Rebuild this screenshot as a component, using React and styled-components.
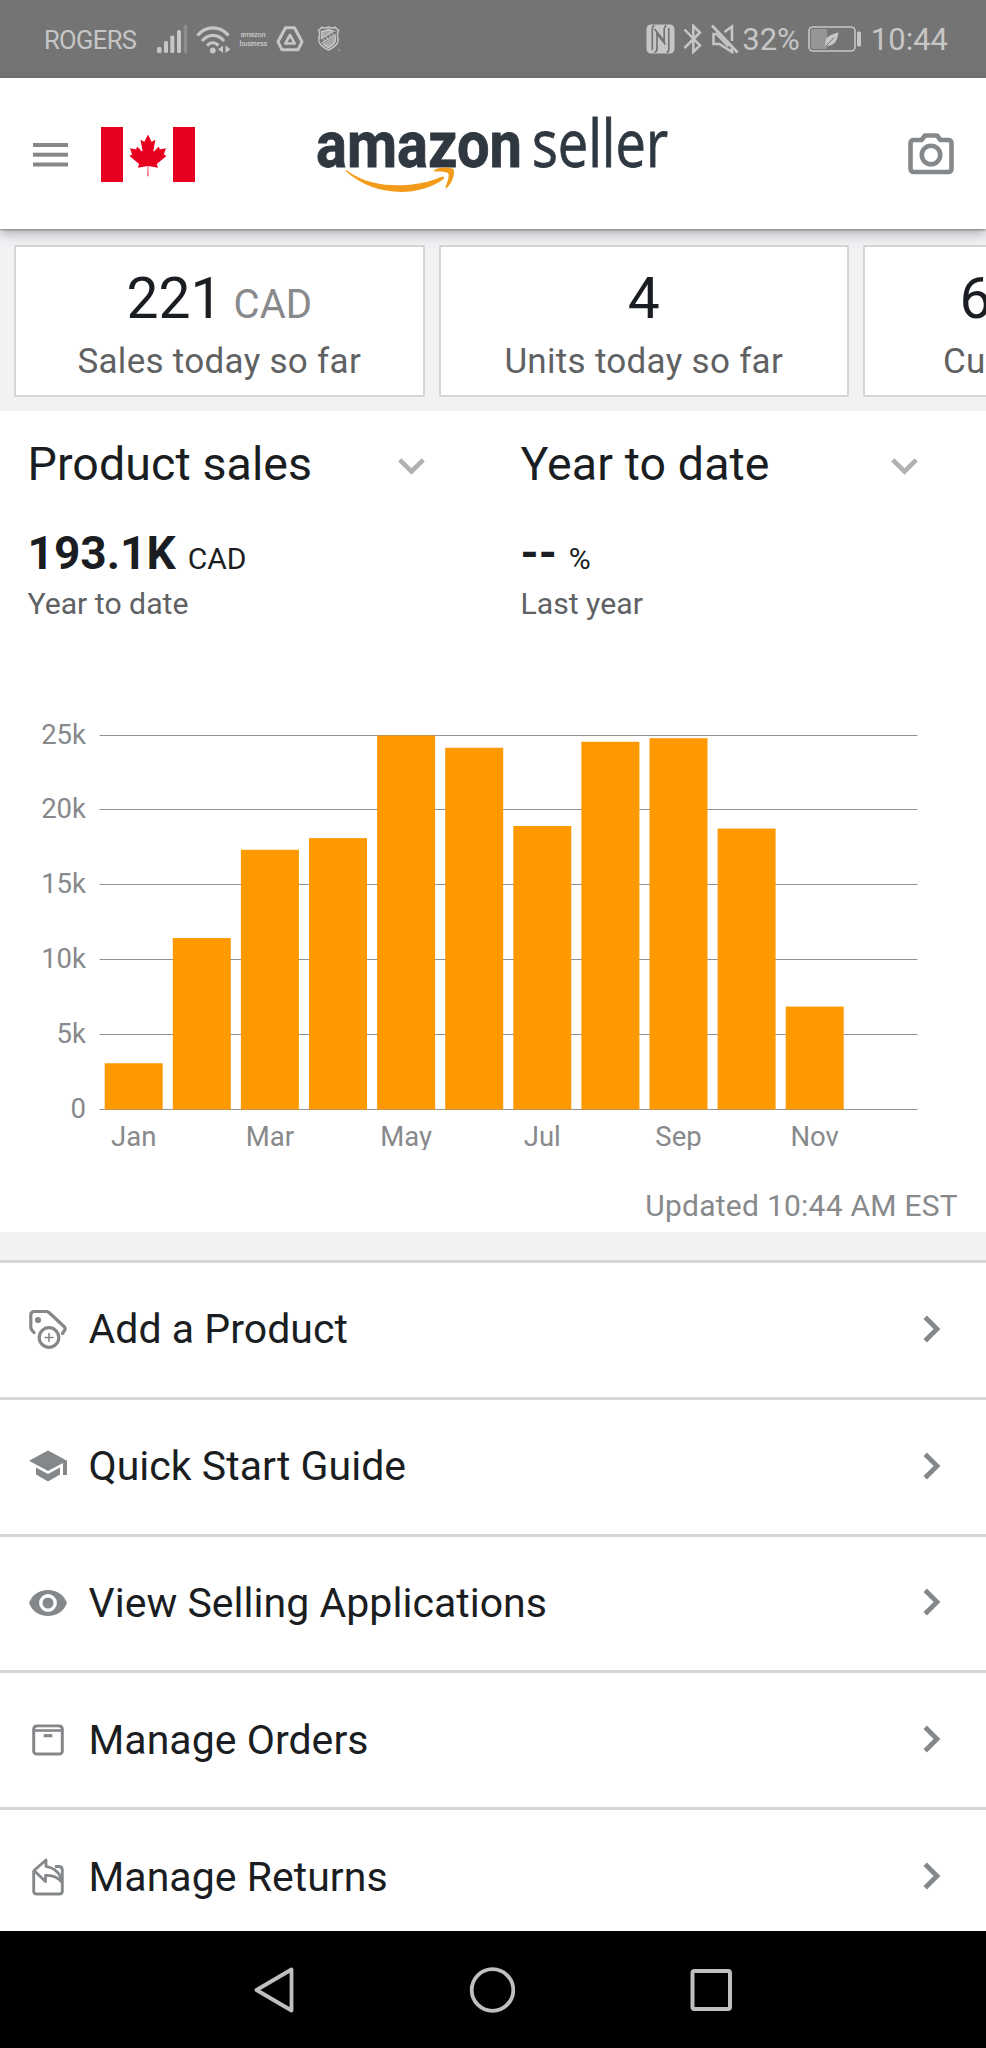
import React from 'react';
import styled, { createGlobalStyle } from 'styled-components';

const COLORS = {
  INK: '#1a1d21',
  TEXT: '#5f6163',
  MUTED: '#87898b',
  ICON: '#85888b',
  LINE: '#d4d6d7',
  STRIP: '#f0f2f4',
  ORANGE: '#ff9900',
  STATUS: '#747474',
  STATUS_ICON: '#c6c6c6',
  LOGO: '#2f3841',
  RED: '#e8001f',
};

const GlobalStyle = createGlobalStyle`
  body {
    margin: 0;
    background-color: #ffffff;
  }

  * {
    box-sizing: border-box;
  }
`;

const Screen = styled.div`
  display: flex;
  flex-direction: column;
  width: 986px;
  height: 2048px;
  overflow: hidden;
  font-family: Roboto, 'Liberation Sans', sans-serif;
  color: ${COLORS.INK};
  background-color: #ffffff;

  svg {
    display: block;
    flex: none;
  }
`;

const StyledStatusBar = styled.div`
  display: flex;
  flex: none;
  align-items: center;
  justify-content: space-between;
  height: 78px;
  padding: 0 38px 0 44px;
  color: ${COLORS.STATUS_ICON};
  background-color: ${COLORS.STATUS};
`;

const StatusGroup = styled.div`
  display: flex;
  align-items: center;
  gap: 8px;
`;

const StatusText = styled.span`
  font-size: 31px;
  line-height: 36px;
  white-space: nowrap;
  padding-top: 2px;
`;

const Carrier = styled(StatusText)`
  margin-right: 13px;
  font-size: 25.5px;
  letter-spacing: -0.6px;
`;

const BatteryLevel = styled(StatusText)`
  margin-left: -5px;
`;

const Clock = styled(StatusText)`
  margin-left: 1px;
`;

const BusinessBadge = styled.div`
  width: 27px;
  margin: 0 2px 0 0;
  font-size: 7.5px;
  font-weight: 500;
  line-height: 9px;
  text-align: center;
  letter-spacing: -0.3px;
`;

const StyledHeader = styled.header`
  position: relative;
  z-index: 1;
  display: flex;
  flex: none;
  align-items: center;
  height: 151px;
  padding: 0 32px 0 33px;
  background-color: #ffffff;
  box-shadow: 0 1px 2px rgba(60, 60, 70, 0.5), 0 4px 12px rgba(60, 60, 70, 0.4);

  .header-menu {
    margin-top: 2px;
  }

  .header-flag {
    margin: 2px 0 0 33px;
  }

  .header-logo {
    margin-left: 121px;
    overflow: visible;
  }

  .header-camera {
    margin: 0 0 0 auto;
  }
`;

const CardStrip = styled.div`
  display: flex;
  flex: none;
  gap: 14px;
  height: 182px;
  padding: 16px 0 14px 14px;
  overflow: hidden;
  background-color: ${COLORS.STRIP};
`;

const Card = styled.div`
  display: flex;
  flex: none;
  flex-direction: column;
  align-items: center;
  width: 410.5px;
  height: 152px;
  padding-top: 18px;
  border: 2px solid ${COLORS.LINE};
  background-color: #ffffff;
`;

const CardValue = styled.div`
  height: 68px;
  font-size: 57px;
  line-height: 68px;
  white-space: nowrap;

  span {
    margin-left: 11px;
    font-size: 40px;
    line-height: 40px;
    color: ${COLORS.MUTED};
  }
`;

const CardLabel = styled.div`
  margin-top: 8px;
  font-size: 35px;
  line-height: 42px;
  letter-spacing: 0.3px;
  white-space: nowrap;
  color: ${COLORS.TEXT};
`;

const Summary = styled.section`
  display: grid;
  flex: none;
  grid-template-columns: 493px 493px;
  height: 309px;
  padding-top: 26px;
`;

const SummaryColumn = styled.div`
  padding: 0 68.5px 0 27.5px;
`;

const Dropdown = styled.div`
  display: flex;
  align-items: center;
  justify-content: space-between;
  height: 54px;
  font-size: 46.5px;
  letter-spacing: 0.1px;
  white-space: nowrap;

  svg {
    margin-top: 4px;
  }
`;

const Figure = styled.div`
  height: 54px;
  margin-top: 35px;
  font-size: 46px;
  font-weight: 700;
  line-height: 54px;
  white-space: nowrap;

  span {
    margin-left: 12px;
    font-size: 30px;
    font-weight: 400;
    line-height: 30px;
  }
`;

const Caption = styled.div`
  margin-top: 6px;
  font-size: 30.2px;
  line-height: 36px;
  color: ${COLORS.TEXT};
`;

const AxisLabel = styled.text`
  font-family: Roboto, 'Liberation Sans', sans-serif;
  font-size: 27.5px;
  fill: ${COLORS.MUTED};
`;

const Updated = styled.div`
  flex: none;
  height: 82px;
  padding: 38px 28px 0 0;
  font-size: 30px;
  letter-spacing: 0.25px;
  line-height: 36px;
  text-align: right;
  color: ${COLORS.MUTED};
`;

const Divider = styled.div`
  flex: none;
  height: 28px;
  background-color: ${COLORS.STRIP};
`;

const Menu = styled.nav`
  flex: 1;
  min-height: 0;
  overflow: hidden;
`;

const MenuItem = styled.div`
  display: grid;
  grid-template-columns: 38px 1fr 18px;
  column-gap: 21.5px;
  align-items: center;
  height: 136.8px;
  padding: 0 45px 1px 29px;
  border-top: 3px solid ${COLORS.LINE};
  font-size: 41px;
  letter-spacing: 0.03px;
  white-space: nowrap;

  .menu-chevron {
    margin-bottom: 1px;
  }
`;

const NavigationBar = styled.div`
  display: flex;
  flex: none;
  align-items: center;
  justify-content: center;
  gap: 175px;
  height: 117px;
  background-color: #000000;
`;

const SignalIcon = () => (
  <svg width="31" height="28" viewBox="0 0 31 28" fill="currentColor">
    <rect x="0" y="22" width="4.5" height="6" rx="1.5" />
    <rect x="7" y="16" width="4" height="12" rx="1.5" />
    <rect x="13.3" y="10.5" width="4" height="17.5" rx="1.5" />
    <rect x="20" y="5" width="4" height="23" rx="1.5" />
    <rect x="26.7" y="0" width="3.5" height="28" rx="1" opacity="0.3" />
  </svg>
);

const WifiIcon = () => (
  <svg width="35" height="29" viewBox="0 0 35 29" fill="none" stroke="currentColor" strokeWidth="3.2">
    <path d="M1.5 10.5C10 .4 24 .4 32.5 10.5" />
    <path d="M6 16C12.5 8.5 21.5 8.5 28 16" />
    <path d="M11 20.5C14.5 17 19 17 22.5 20.5" />
    <circle cx="16.8" cy="25.5" r="2.9" fill="currentColor" stroke="none" />
    <path d="M27 20.5v7.5l-5-3.7zM29.5 20.5v7.5l5-3.7z" fill="currentColor" stroke="none" />
  </svg>
);

const DriveIcon = () => (
  <svg width="28" height="26" viewBox="0 0 28 26" fill="none" stroke="currentColor" strokeWidth="3" strokeLinejoin="round">
    <path d="M9.5 1.8h9l7.5 14-4 8H6l-4-8z" />
    <path d="M14 9l4.7 8.5H9.3z" strokeWidth="2.6" />
  </svg>
);

const ShieldIcon = () => (
  <svg className="shield" width="34" height="26" viewBox="-5 0 34 26" fill="none" stroke="currentColor" strokeWidth="1.5">
    <path d="M1.5 4.5L5 1.2Q8 3 11.5 1Q15 3 18 1.2L21.7 4.5Q19.5 8 21.2 13Q22 19 11.5 24Q1 19 1.8 13Q3.5 8 1.5 4.5z" />
    <path d="M4.5 5.5Q8 5.5 11.5 3.5Q15 5.5 18.5 5.5Q17.5 9 18.5 13Q18.5 18 11.5 21.5Q4.5 18 4.5 13Q5.5 9 4.5 5.5z" fill="currentColor" fillOpacity="0.65" />
    <path d="M3.5 16.5L19 6.5" stroke={COLORS.STATUS} strokeWidth="4.5" />
    <path d="M4.5 17L19 8.5M4.5 12.5L17 5" strokeWidth="1.1" />
    <path d="M6.5 13l1.5 2.5M9.5 11l1.5 3M12.5 9.3l1.5 2.5M15.5 7.5l1 2.5" strokeWidth="1.1" />
    <circle cx="22.3" cy="24" r="0.7" fill="currentColor" stroke="none" />
  </svg>
);

const NfcIcon = () => (
  <svg width="29" height="30" viewBox="0 0 29 30">
    <rect x="0.5" y="0.5" width="28" height="29" rx="4.5" fill="currentColor" />
    <g fill="none" stroke={COLORS.STATUS} strokeWidth="1.7">
      <path d="M8.5 1.5Q6.3 2 6.3 5V26" />
      <path d="M20.5 28.5Q22.8 28 22.8 25V4" />
      <path d="M8.5 28.5Q11 27.5 11 25V10L19.5 20.5" />
      <path d="M20.5 1.5Q18.2 2.500 18.200 5V17L8.5 5" />
    </g>
  </svg>
);

const BluetoothIcon = () => (
  <svg width="20" height="30" viewBox="0 0 20 30" fill="none" stroke="currentColor" strokeWidth="2.5">
    <path d="M1.5 5.5L17 21.5L10.3 28V2L17 8.5L1.5 24" />
  </svg>
);

const MuteIcon = () => (
  <svg width="28" height="30" viewBox="0 0 28 30" fill="none" stroke="currentColor" strokeWidth="2.5">
    <path d="M1 1.5L26.5 28.5" strokeWidth="2.8" />
    <path d="M13.5 8L21 2.5V17M7 10H2.5V20H8.5L21 28V23.5" />
    <path d="M6 10.5L17.5 22.5" />
  </svg>
);

const BatteryIcon = () => (
  <svg width="54" height="26" viewBox="0 0 54 26">
    <rect x="1" y="1" width="46" height="24" rx="4" fill="none" stroke="currentColor" strokeWidth="1.6" />
    <rect x="3" y="3" width="16" height="20" rx="1.5" fill="currentColor" opacity="0.42" />
    <path d="M30.5 6.5C22 8.5 17.5 11 17.5 16L16.5 20.5L19 20C26 20 29.5 15 30.5 6.5z" fill="currentColor" />
    <path d="M17.5 20.5L26 11.5" stroke={COLORS.STATUS} strokeWidth="1" />
    <rect x="49" y="5.5" width="4" height="15" rx="1.5" fill="currentColor" />
  </svg>
);

const HamburgerIcon = () => (
  <svg className="header-menu" width="35" height="24" viewBox="0 0 35 24" fill={COLORS.ICON}>
    <rect y="0" width="35" height="4" />
    <rect y="9.7" width="35" height="4" />
    <rect y="19.5" width="35" height="4" />
  </svg>
);

const CanadaFlag = () => (
  <svg className="header-flag" width="94" height="56" viewBox="0 0 94 56" fill={COLORS.RED}>
    <rect width="22" height="55" />
    <rect x="72" width="22" height="55" />
    <path
      transform="translate(-.8 3.5) scale(.00995 .0103)"
      d="m4850 4430-20-863a95 95 0 0 1 126-98l859 151-116-320a65 65 0 0 1 20-73l941-762-212-99a65 65 0 0 1-34-79l186-572-542 115a65 65 0 0 1-73-38l-105-247-423 454a65 65 0 0 1-111-57l204-1052-327 189a65 65 0 0 1-91-27l-332-652-332 652a65 65 0 0 1-91 27l-327-189 204 1052a65 65 0 0 1-111 57l-423-454-105 247a65 65 0 0 1-73 38l-542-115 186 572a65 65 0 0 1-34 79l-212 99 941 762a65 65 0 0 1 20 73l-116 320 859-151a95 95 0 0 1 126 98l-20 863z"
    />
  </svg>
);

const LogoWord = styled.text`
  font-family: ${({ $family }) => $family}, sans-serif;
  font-size: 65px;
  font-weight: ${({ $weight }) => $weight};
  fill: ${COLORS.LOGO};
  stroke: ${COLORS.LOGO};
  stroke-width: 0.8px;
`;

const Logo = () => (
  <svg className="header-logo" width="354" height="84" viewBox="316 111 354 84">
    <LogoWord $family="Roboto" $weight={700} x="316" y="165.5" textLength="206" lengthAdjust="spacingAndGlyphs">amazon</LogoWord>
    <LogoWord $family="'Open Sans'" $weight={400} x="532" y="165.5" textLength="136" lengthAdjust="spacingAndGlyphs">seller</LogoWord>
    {/* smile and arrow head */}
    <g fill="#f39c1c">
      <path d="M346.5 169.3C364 182 382 184.5 401 184.3C416 184 430 181 441.5 175.8C443.6 175 445 176.8 443.3 178.2C432 186.5 416 190.9 401.5 190.9C380 190.9 361 183.5 346.3 170.7C345.6 170 345.9 169 346.5 169.3z" />
      <path d="M434.3 168.9C440 165.8 450 165.8 453.5 168C455.5 172.2 452 182.2 447 186.8C446 187.6 445.1 187.2 445.5 186.1C447.5 181.2 449.5 174.7 448.3 172.4C446.5 170.6 440 170.8 435 170.6C433.7 170.6 433.5 169.6 434.3 168.9z" />
    </g>
  </svg>
);

const CameraIcon = () => (
  <svg className="header-camera" width="46" height="42" viewBox="0 0 46 42" fill="none" stroke={COLORS.ICON}>
    <path d="M6 7H13.5L17 2.5H29L32.5 7H40Q43.5 7 43.5 10.5V35.5Q43.5 39 40 39H6Q2.5 39 2.5 35.5V10.5Q2.5 7 6 7z" strokeWidth="4.6" strokeLinejoin="round" />
    <circle cx="23" cy="22" r="9.2" strokeWidth="4.6" />
  </svg>
);

const ChevronDown = () => (
  <svg width="27" height="17" viewBox="0 0 27 17" fill="none" stroke="#b0b1b3" strokeWidth="4.6">
    <path d="M1.8 1.8L13.5 13.5L25.2 1.8" />
  </svg>
);

const ChevronRight = () => (
  <svg className="menu-chevron" width="18" height="28" viewBox="0 0 18 28" fill="none" stroke={COLORS.ICON} strokeWidth="4.8">
    <path d="M2.2 2.2L14 14L2.2 25.8" />
  </svg>
);

const AddProductIcon = () => (
  <svg width="38" height="40" viewBox="0 0 38 40" fill="none" stroke={COLORS.ICON} strokeWidth="3.2" strokeLinecap="round" strokeLinejoin="round">
    <path d="M5 23.5L2.8 21Q1.8 20 1.8 18V6Q1.8 2.5 5.5 2.5H17Q18.5 2.5 20 3.5L35 17.5Q37 19.5 35.5 21.5L33.5 24.5" />
    <circle cx="9" cy="11" r="3.1" fill={COLORS.ICON} stroke="none" />
    <circle cx="20" cy="28.5" r="9.8" />
    <path d="M20 24.5V32.5M16 28.5H24" strokeWidth="1.6" />
  </svg>
);

const GuideIcon = () => (
  <svg width="38" height="32" viewBox="0 0 38 32" fill={COLORS.ICON}>
    <path d="M19 .5L38 10.7V25H34V13L19 21L0 10.7z" />
    <path d="M7 17.5L19 24L31 17.5V24.5L19 31.5L7 24.5z" />
  </svg>
);

const ViewIcon = () => (
  <svg width="38" height="26" viewBox="0 0 38 26">
    <path d="M19 0C28 0 35 5 38 13C35 21 28 26 19 26C10 26 3 21 0 13C3 5 10 0 19 0z" fill={COLORS.ICON} />
    <circle cx="19" cy="13" r="7.2" fill={COLORS.ICON} stroke="#ffffff" strokeWidth="3.4" />
  </svg>
);

const OrdersIcon = () => (
  <svg width="38" height="32" viewBox="0 0 38 32" fill="none" stroke={COLORS.ICON} strokeWidth="3">
    <rect x="4.7" y="2" width="28.6" height="28" rx="3" />
    <path d="M5 6.5H33" strokeWidth="2.6" />
    <path d="M8 4.2H30" stroke="#ffffff" strokeWidth="1.2" />
    <path d="M14.7 11.7H23.3" strokeWidth="3.2" />
  </svg>
);

const ReturnsIcon = () => (
  <svg width="38" height="38" viewBox="0 0 38 38" fill="none" stroke={COLORS.ICON} strokeWidth="2.9" strokeLinejoin="round">
    <path d="M4.7 13V33Q4.7 36 7.5 36H30.5Q33.3 36 33.3 33V12Q33.3 8.5 29.5 8.5H26" />
    <path d="M17 2L5 12.5L16.5 23.5V17.5Q26 16.5 32.8 24Q31 11 17 8.3z" fill="#ffffff" strokeWidth="2.8" />
  </svg>
);

const BackIcon = () => (
  <svg width="40" height="46" viewBox="0 0 40 46" fill="none" stroke="#bfbfbf" strokeWidth="3.8" strokeLinejoin="round">
    <path d="M2.5 23L37.5 2.5V43.5z" />
  </svg>
);

const HomeIcon = () => (
  <svg width="46" height="46" viewBox="0 0 46 46" fill="none" stroke="#bfbfbf" strokeWidth="3.8">
    <circle cx="23.5" cy="23" r="20.8" />
  </svg>
);

const RecentIcon = () => (
  <svg width="42" height="42" viewBox="0 0 42 42" fill="none" stroke="#bfbfbf" strokeWidth="4">
    <rect x="2.5" y="2" width="37.5" height="38" rx="2" />
  </svg>
);

const cards = [
  { value: '221', unit: 'CAD', label: 'Sales today so far' },
  { value: '4', label: 'Units today so far' },
  { value: '6500', unit: 'CAD', label: 'Current balance' },
];

const menuItems = [
  { label: 'Add a Product', Icon: AddProductIcon },
  { label: 'Quick Start Guide', Icon: GuideIcon },
  { label: 'View Selling Applications', Icon: ViewIcon },
  { label: 'Manage Orders', Icon: OrdersIcon },
  { label: 'Manage Returns', Icon: ReturnsIcon },
];

const sales = [
  { month: 'Jan', value: 3090 },
  { month: 'Feb', value: 11460 },
  { month: 'Mar', value: 17360 },
  { month: 'Apr', value: 18140 },
  { month: 'May', value: 25000 },
  { month: 'Jun', value: 24180 },
  { month: 'Jul', value: 18950 },
  { month: 'Aug', value: 24580 },
  { month: 'Sep', value: 24820 },
  { month: 'Oct', value: 18780 },
  { month: 'Nov', value: 6880 },
];

const ticks = [25, 20, 15, 10, 5, 0];
const BASELINE = 389;
const PX_PER_K = 14.96;
const BAR_STEP = 68.1;

const SalesChart = () => (
  <svg width="986" height="430" viewBox="0 0 986 430">
    {ticks.map((tick) => (
      <g key={tick}>
        <rect x="99.5" y={Math.floor(BASELINE - tick * PX_PER_K)} width="818" height="1" fill="#8f9193" />
        <AxisLabel x="86" y={BASELINE - tick * PX_PER_K + 8.5} textAnchor="end">
          {tick ? `${tick}k` : '0'}
        </AxisLabel>
      </g>
    ))}
    {sales.map(({ month, value }, index) => {
      const height = (value / 1000) * PX_PER_K;
      return (
        <rect
          key={month}
          x={104.7 + index * BAR_STEP}
          y={BASELINE + 0.5 - height}
          width="58"
          height={height}
          fill={COLORS.ORANGE}
        />
      );
    })}
    {/* only every other month gets a label */}
    {sales.map(({ month }, index) => (
      index % 2 === 0 && (
        <AxisLabel key={month} x={133.7 + index * BAR_STEP} y="425.5" textAnchor="middle">
          {month}
        </AxisLabel>
      )
    ))}
  </svg>
);

const StatusBar = () => (
  <StyledStatusBar>
    <StatusGroup>
      <Carrier>ROGERS</Carrier>
      <SignalIcon />
      <WifiIcon />
      <BusinessBadge>amazon business</BusinessBadge>
      <DriveIcon />
      <ShieldIcon />
    </StatusGroup>
    <StatusGroup>
      <NfcIcon />
      <BluetoothIcon />
      <MuteIcon />
      <BatteryLevel>32%</BatteryLevel>
      <BatteryIcon />
      <Clock>10:44</Clock>
    </StatusGroup>
  </StyledStatusBar>
);

const App = () => (
  <>
    <GlobalStyle />
    <Screen>
      <StatusBar />
      <StyledHeader>
        <HamburgerIcon />
        <CanadaFlag />
        <Logo />
        <CameraIcon />
      </StyledHeader>

      <CardStrip>
        {cards.map(({ value, unit, label }) => (
          <Card key={label}>
            <CardValue>
              {value}
              {unit && <span>{unit}</span>}
            </CardValue>
            <CardLabel>{label}</CardLabel>
          </Card>
        ))}
      </CardStrip>

      <Summary>
        <SummaryColumn>
          <Dropdown>
            Product sales
            <ChevronDown />
          </Dropdown>
          <Figure>193.1K<span>CAD</span></Figure>
          <Caption>Year to date</Caption>
        </SummaryColumn>
        <SummaryColumn>
          <Dropdown>
            Year to date
            <ChevronDown />
          </Dropdown>
          <Figure>--<span>%</span></Figure>
          <Caption>Last year</Caption>
        </SummaryColumn>
      </Summary>

      <SalesChart />
      <Updated>Updated 10:44 AM EST</Updated>
      <Divider />

      <Menu>
        {menuItems.map(({ label, Icon }) => (
          <MenuItem key={label}>
            <Icon />
            {label}
            <ChevronRight />
          </MenuItem>
        ))}
      </Menu>

      <NavigationBar>
        <BackIcon />
        <HomeIcon />
        <RecentIcon />
      </NavigationBar>
    </Screen>
  </>
);

export default App;
